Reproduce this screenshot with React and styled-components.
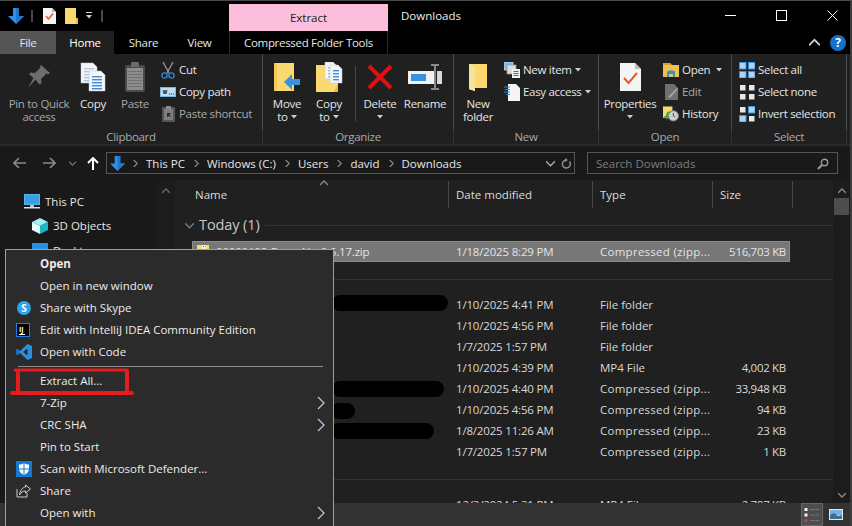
import React from "react";
import styled, { createGlobalStyle } from "styled-components";

const GlobalStyle = createGlobalStyle`
  html, body {
    margin: 0;
    padding: 0;
    background: #000;
    font-family: "Open Sans", "Noto Sans", sans-serif;
    font-size: 11.5px;
    color: #e4e4e4;
  }
`;

const Y = "#fbd96f";
const YD = "#e8b94a";
const B = "#2f90e6";

// ---- drawings

const ArrowDown = ({ s = 16 }) => (
  <svg width={s} height={s} viewBox="0 0 16 16">
    <path d="M5 0h6v8h5l-8 8-8-8h5z" fill={B} />
    <path d="M8 0h3v8h5l-8 8z" fill="#1c78cc" />
  </svg>
);
const DocCheck = () => (
  <svg width="13" height="16" viewBox="0 0 13 16">
    <path d="M0 0h9l4 4v12H0z" fill="#f4f4f4" />
    <path d="M9 0l4 4H9z" fill="#bbb" />
    <path d="M3 8l2.500 3L10 5.500" stroke="#e8602c" strokeWidth="1.600" fill="none" />
  </svg>
);
const FolderNote = () => (
  <svg width="13" height="16" viewBox="0 0 13 16">
    <path d="M0 0h11v16H0z" fill={Y} />
    <path d="M11 10h2v6h-2z" fill={YD} />
  </svg>
);
const Pin = () => (
  <svg width="22" height="24" viewBox="0 0 22 24">
    <path d="M13 0l9 8-2 1.500-1.500-1L13 14l.5 4-2 1.500-4-5L0 23l5.500-10-4.500-4 2-1.500 4 .5 5.500-5.500-.5-1.500z" fill="#6e6e6e" />
  </svg>
);
const DocLines = ({ x, y, w, h, c = "#3a8de0" }) => (
  <g>
    <path d={`M${x} ${y}h${w - 4}l4 4v${h - 4}h-${w}z`} fill="#f5f5f5" stroke="#c9c9c9" strokeWidth=".5" />
    {[5, 8, 11, 14, 17].filter((n) => n < h - 2).map((n) => (
      <rect key={n} x={x + 3} y={y + n} width={w - 6} height="1.400" fill={c} />
    ))}
  </g>
);
const CopyBig = () => (
  <svg width="26" height="30" viewBox="0 0 26 30">
    <DocLines x={1} y={1} w={16} h={20} c="#a7c7ea" />
    <DocLines x={9} y={9} w={16} h={20} />
  </svg>
);
const PasteBig = () => (
  <svg width="22" height="30" viewBox="0 0 22 30">
    <rect x="1" y="3" width="20" height="27" rx="2" fill="#4a4a4a" />
    <rect x="3" y="6" width="16" height="22" fill="#8c8c8c" />
    {[9, 12, 15, 18, 21, 24].map((n) => (
      <rect key={n} x="4" y={n} width="14" height="1" fill="#6f6f6f" />
    ))}
    <rect x="7" y="0" width="8" height="5" rx="1" fill="#6a6a6a" />
  </svg>
);
const Scissors = () => (
  <svg width="14" height="17" viewBox="0 0 14 17">
    <path d="M2 0l6 11M12 0L6 11" stroke="#9a9a9a" strokeWidth="1.300" fill="none" />
    <circle cx="3.500" cy="13.500" r="2.600" stroke="#2e86d6" strokeWidth="1.400" fill="none" />
    <circle cx="10.500" cy="13.500" r="2.600" stroke="#2e86d6" strokeWidth="1.400" fill="none" />
  </svg>
);
const PathBox = () => (
  <svg width="16" height="10" viewBox="0 0 16 10">
    <rect x=".5" y=".5" width="15" height="9" fill="#bcdff7" stroke="#7fb6e0" />
    <path d="M3 3l1 4 1-4 1 4 1-4" stroke="#222" strokeWidth=".8" fill="none" />
    <path d="M9 7h1M11 7h1M13 7h1" stroke="#222" />
  </svg>
);
const PasteSmall = () => (
  <svg width="13" height="16" viewBox="0 0 13 16">
    <rect x="0" y="1" width="13" height="15" rx="1" fill="#555" />
    <rect x="2" y="3" width="9" height="11" fill="#7e7e7e" />
    <rect x="4" y="0" width="5" height="3" fill="#8a8a8a" />
    <path d="M5 11V7h4l-1.500 1.500L9 10l-1 1-1.500-1.500L6 11z" fill="#2a2a2a" />
  </svg>
);
const MoveTo = () => (
  <svg width="28" height="29" viewBox="0 0 28 29">
    <path d="M1 0h20v28H1z" fill={Y} />
    <path d="M1 0h3v28H1z" fill="#f6c95a" />
    <path d="M11 19l8-8v5h8v6h-8v5z" fill="#3a94dc" />
  </svg>
);
const CopyTo = () => (
  <svg width="28" height="31" viewBox="0 0 28 31">
    <path d="M1 3h22v27H1z" fill={Y} />
    <path d="M23 22v8h-4z" fill={YD} />
    <DocLines x={10} y={0} w={12} h={17} c="#8fb9e6" />
    <DocLines x={15} y={3} w={12} h={18} />
  </svg>
);
const DeleteX = () => (
  <svg width="26" height="26" viewBox="0 0 26 26">
    <path d="M2 2l22 22M24 2L2 24" stroke="#e01010" strokeWidth="4" />
  </svg>
);
const RenameBox = () => (
  <svg width="34" height="28" viewBox="0 0 34 28">
    <rect x="0" y="8" width="27" height="13" fill="#f2f2f2" />
    <rect x="3" y="11" width="15" height="7" fill="#3a92de" />
    <path d="M27 2h-4m8 0h-4v24m0 0h-4m8 0h-4" stroke="#8a8a8a" strokeWidth="2" fill="none" />
    <rect x="29" y="8" width="5" height="13" fill="#dadada" />
  </svg>
);
const NewFolderBig = () => (
  <svg width="20" height="28" viewBox="0 0 20 28">
    <path d="M1 1l6 1v26l-6-2z" fill="#e6b94f" />
    <path d="M1 1h18v24H7v3l-6-2z" fill={Y} />
    <path d="M1 1l6 3v24l-6-2z" fill="#f7e3a0" />
  </svg>
);
const NewItem = () => (
  <svg width="16" height="16" viewBox="0 0 16 16">
    <rect x="0" y="0" width="9" height="8" fill="#7eb8e8" stroke="#ddd" strokeWidth=".7" />
    <rect x="3" y="3" width="9" height="9" fill="#ddd" stroke="#999" strokeWidth=".7" />
    <rect x="8" y="7" width="8" height="9" fill="#f2f2f2" />
    <path d="M9.500 9.500h5M9.500 11.500h5M9.500 13.500h5" stroke="#666" />
  </svg>
);
const EasyAccess = () => (
  <svg width="16" height="17" viewBox="0 0 16 17">
    <path d="M4 0h8l4 4v13H4z" fill="#f5f5f5" />
    <path d="M0 3h6M1 5.500h5M0 8h6M2 10.500h4" stroke="#2e86d6" strokeWidth="1" />
  </svg>
);
const PropertiesDoc = () => (
  <svg width="21" height="28" viewBox="0 0 21 28">
    <path d="M0 0h15l6 6v22H0z" fill="#f4f4f4" />
    <path d="M15 0l6 6h-6z" fill="#bdbdbd" />
    <path d="M4 15l4.500 5L17 10" stroke="#ea5a20" strokeWidth="2" fill="none" />
  </svg>
);
const OpenFolder = () => (
  <svg width="16" height="14" viewBox="0 0 16 14">
    <path d="M0 0h7l2 2h7v12H0z" fill="#f0c14b" />
    <path d="M0 0h7l1 2H0z" fill="#d9a52e" />
    <path d="M4 9c0-2 8-2 8 0v5h-2v-3H6v3H4z" fill="#2d8fe0" />
  </svg>
);
const EditDoc = () => (
  <svg width="13" height="16" viewBox="0 0 13 16">
    <path d="M0 0h9l4 4v12H0z" fill="#6f6f6f" />
    <path d="M3 13L12 4l1 1-8 9z" fill="#a8a8a8" />
  </svg>
);
const HistoryIcon = () => (
  <svg width="17" height="16" viewBox="0 0 17 16">
    <path d="M0 0h10v12H0z" fill={Y} />
    <circle cx="11" cy="10" r="5.500" fill="#cfcfcf" stroke="#777" />
    <path d="M11 7v3l2 1" stroke="#444" fill="none" />
    <path d="M1 10l3 4 3-4H5c0-2 1-3 3-3V5C5 5 3 7 3 10z" fill="#43a33c" />
  </svg>
);
const Squares = ({ kinds }) => (
  <svg width="16" height="16" viewBox="0 0 16 16">
    {[[0, 0], [9, 0], [0, 9], [9, 9]].map(([x, y], i) =>
      kinds[i] === "b" ? (
        <rect key={i} x={x + 0.5} y={y + 0.5} width="6.500" height="6.500" fill="#a9d4f5" stroke="#3a92de" />
      ) : (
        <rect key={i} x={x + 1} y={y + 1} width="5.500" height="5.500" fill="#e8e8e8" />
      )
    )}
  </svg>
);
const SmallCaret = () => (
  <svg width="6" height="4" viewBox="0 0 6 4">
    <path d="M0 0h6L3 3.500z" fill="#cfcfcf" />
  </svg>
);
const Chevron = ({ dir = "right", c = "#8a8a8a", s = 8 }) => {
  const d = {
    right: "M2 0l4 4-4 4",
    down: "M0 2l4 4 4-4",
    up: "M0 6l4-4 4 4",
  }[dir];
  return (
    <svg width={s} height={s} viewBox="0 0 8 8">
      <path d={d} stroke={c} strokeWidth="1.300" fill="none" />
    </svg>
  );
};
const NavArrow = ({ back, c }) => (
  <svg width="13" height="12" viewBox="0 0 13 12">
    <path
      d={back ? "M6 1L1 6l5 5M1 6h12" : "M7 1l5 5-5 5M12 6H0"}
      stroke={c}
      strokeWidth="1.600"
      fill="none"
    />
  </svg>
);
const UpArrow = () => (
  <svg width="12" height="13" viewBox="0 0 12 13">
    <path d="M1 6l5-5 5 5M6 1v12" stroke="#fff" strokeWidth="2" fill="none" />
  </svg>
);
const Refresh = () => (
  <svg width="11" height="12" viewBox="0 0 11 12">
    <path d="M8.500 3.500a4 4 0 1 1-3-1.500" stroke="#8f8f8f" strokeWidth="1.500" fill="none" />
    <path d="M4 0v4l3-2z" fill="#8f8f8f" />
  </svg>
);
const Magnifier = () => (
  <svg width="12" height="12" viewBox="0 0 12 12">
    <circle cx="7.500" cy="4.500" r="3.200" stroke="#999" strokeWidth="1.400" fill="none" />
    <path d="M5 7l-4 4" stroke="#999" strokeWidth="2" />
  </svg>
);
const Monitor = () => (
  <svg width="16" height="15" viewBox="0 0 16 15">
    <rect x="0" y="0" width="16" height="11" fill="#58b6ef" />
    <rect x="1" y="1" width="14" height="9" fill="#3aa0e4" />
    <rect x="6" y="11" width="4" height="2" fill="#bbb" />
    <rect x="0" y="13" width="16" height="1.500" fill="#ddd" />
  </svg>
);
const Cube = () => (
  <svg width="16" height="16" viewBox="0 0 16 16">
    <path d="M8 0l8 4-8 4-8-4z" fill="#9ff0f2" />
    <path d="M0 4l8 4v8l-8-4z" fill="#e6fbfb" />
    <path d="M16 4l-8 4v8l8-4z" fill="#1fb5c9" />
  </svg>
);
const DesktopIcon = () => (
  <svg width="16" height="14" viewBox="0 0 16 14">
    <rect width="16" height="11" fill="#2a8fe0" />
  </svg>
);
const ZipIcon = () => (
  <svg width="12" height="14" viewBox="0 0 12 14">
    <rect width="12" height="14" fill={Y} />
    <rect x="5" y="0" width="3" height="8" fill="#f4f4f4" />
    <rect x="6" y="1" width="1" height="1" fill="#444" />
    <rect x="6" y="4" width="1" height="1" fill="#444" />
  </svg>
);
const VsCode = () => (
  <svg width="16" height="16" viewBox="0 0 16 16">
    <path d="M11.500 0L16 2v12l-4.500 2L4 9l-2.500 2L0 10V6l1.500-1L4 7z" fill="#2c8fdc" />
    <path d="M11.500 4.500L7 8l4.500 3.500z" fill="#2b2b2b" />
    <path d="M0 6l1.500-1L4 8 1.500 11 0 10z" fill="#1c6fb8" />
  </svg>
);
const Shield = () => (
  <svg width="16" height="16" viewBox="0 0 16 16">
    <rect width="16" height="16" fill="#1678d2" />
    <path d="M8 2c1.500 1 3.500 1.500 5 1.500V8c0 3-2.500 5-5 6-2.500-1-5-3-5-6V3.500C4.500 3.500 6.500 3 8 2z" fill="#fff" />
    <path d="M7.500 2v12.500M8.500 2v12.500M3 7.500h10M3 8.500h10" stroke="#1678d2" strokeWidth=".5" />
  </svg>
);
const ShareIcon = () => (
  <svg width="15" height="14" viewBox="0 0 15 14">
    <path d="M1 5v8h10V9" stroke="#cfcfcf" fill="none" />
    <path d="M9.500 1l5 4-5 4V7C7 7 5 8 3.500 11 4 7 6 3.500 9.500 3z" stroke="#cfcfcf" fill="none" />
  </svg>
);
const DetailsView = () => (
  <svg width="16" height="16" viewBox="0 0 16 16">
    {[1, 6.500, 12].map((y, i) => (
      <g key={y}>
        <rect x="0.500" y={y} width="3" height="3" fill={["#f0f0f0", "#f0f0f0", "#e03030"][i]} />
        <rect x="6" y={y + 1} width="4" height="1" fill="#777" />
        <rect x="11" y={y + 1} width="4" height="1" fill="#777" />
      </g>
    ))}
  </svg>
);
const PreviewView = () => (
  <svg width="14" height="11" viewBox="0 0 14 11">
    <rect width="14" height="11" fill="#e8e8e8" />
    <rect x="1" y="1" width="12" height="5" fill="#6fb3e8" />
    <path d="M1 10V6l4-2 4 3 4-1v4z" fill="#3f6f8f" />
  </svg>
);
const MinLine = () => (
  <svg width="11" height="11" viewBox="0 0 11 11">
    <path d="M0 5.500h11" stroke="#fff" />
  </svg>
);
const MaxBox = () => (
  <svg width="11" height="11" viewBox="0 0 11 11">
    <rect x=".5" y=".5" width="10" height="10" stroke="#fff" fill="none" />
  </svg>
);
const CloseX = () => (
  <svg width="11" height="11" viewBox="0 0 11 11">
    <path d="M.5.500l10 10M10.500.500l-10 10" stroke="#fff" />
  </svg>
);

// ---- window frame

const Frame = styled.div`
  position: relative;
  width: 852px;
  height: 526px;
  overflow: hidden;
  display: flex;
  flex-direction: column;
  background: #000;
  border-top: 1px solid #4a4a4a;
  border-right: 2px solid #3c3c3c;
  box-sizing: border-box;
  line-height: 1;
`;
const Spacer = styled.span`
  width: ${(p) => p.$w}px;
  flex: none;
`;

const TitleBar = styled.div`
  display: flex;
  height: 30px;
  flex: none;
`;
const Qat = styled.div`
  width: 229px;
  display: flex;
  align-items: center;
  padding: 0 0 1px 8px;
  box-sizing: border-box;
`;
const QatDivider = styled.div`
  width: 2px;
  height: 12px;
  margin: 0 ${(p) => p.$right || 0}px 0 ${(p) => p.$left || 0}px;
  background: #4a4a4a;
`;
const QatDrop = styled.div`
  display: flex;
  flex-direction: column;
  align-items: center;
  gap: 2px;
  width: 8px;
  margin-left: 7px;
  &::before {
    content: "";
    width: 6px;
    height: 1px;
    background: #ddd;
  }
`;
const ContextTab = styled.div`
  width: 159px;
  margin-top: 3px;
  background: #fbbfdb;
  color: #222;
  display: flex;
  align-items: center;
  justify-content: center;
`;
const WindowTitle = styled.div`
  margin-left: 13px;
  display: flex;
  align-items: center;
  color: #eee;
`;
const WinButtons = styled.div`
  margin-left: auto;
  display: flex;
  align-items: center;
  padding-right: 12px;
  gap: 35px;
  padding-bottom: 2px;
  & > * + * {
    margin-left: 5px;
  }
`;

const TabRow = styled.div`
  display: flex;
  height: 23px;
  flex: none;
  align-items: stretch;
  letter-spacing: -0.3px;
`;
const Tab = styled.div`
  width: ${(p) => p.$w}px;
  margin-right: ${(p) => p.$gap || 0}px;
  display: flex;
  align-items: center;
  justify-content: center;
  color: ${(p) => (p.$active ? "#fff" : "#e6e6e6")};
  background: ${(p) => p.$bg || "transparent"};
  box-sizing: border-box;
  ${(p) => p.$ruled && "border-left: 1px solid #2c2c2c; border-right: 1px solid #2c2c2c;"}
`;
const TabRight = styled.div`
  margin-left: auto;
  display: flex;
  align-items: center;
  gap: 10px;
  padding-right: 4px;
`;
const Help = styled.div`
  width: 16px;
  height: 16px;
  border-radius: 50%;
  background: #1271c9;
  color: #fff;
  font-weight: 700;
  font-size: 12px;
  display: flex;
  align-items: center;
  justify-content: center;
`;

// ---- ribbon

const Ribbon = styled.div`
  display: flex;
  height: 92px;
  flex: none;
  background: #202020;
  border-bottom: 2px solid #2a2a2a;
  box-sizing: border-box;
  letter-spacing: -0.3px;
`;
const Group = styled.div`
  width: ${(p) => p.$w}px;
  flex: none;
  display: flex;
  flex-direction: column;
  box-sizing: border-box;
`;
const GroupBody = styled.div`
  flex: 1;
  display: flex;
  padding: 5px 0 0 ${(p) => p.$pad || 0}px;
  border-right: 1px solid #4a4a4a;
`;
const GroupLabel = styled.div`
  height: 14px;
  display: flex;
  align-items: center;
  justify-content: center;
  color: #a9a9a9;
  border-right: 1px solid #333;
`;
const BigButton = styled.div`
  width: ${(p) => p.$w}px;
  flex: none;
  display: flex;
  flex-direction: column;
  align-items: center;
  text-align: center;
  color: ${(p) => (p.$dim ? "#a9a9a9" : "#e6e6e6")};
`;
const BigIcon = styled.div`
  height: 36px;
  margin-bottom: 2px;
  display: flex;
  align-items: center;
  justify-content: center;
`;
const BigLabel = styled.div`
  line-height: 13px;
  white-space: nowrap;
`;
const CaretLine = styled.div`
  height: 13px;
  display: flex;
  align-items: center;
  justify-content: center;
  gap: 3px;
`;
const VRule = styled.div`
  width: 1px;
  height: 55px;
  margin: 7px 3px 0 5px;
  background: #484848;
`;
const SmallCol = styled.div`
  display: flex;
  flex-direction: column;
  margin-left: ${(p) => p.$left || 0}px;
`;
const SmallRow = styled.div`
  height: 22px;
  display: flex;
  align-items: center;
  gap: 3px;
  white-space: nowrap;
  color: ${(p) => (p.$dim ? "#a9a9a9" : "#e6e6e6")};
  & > svg {
    margin-left: ${(p) => p.$caretGap ?? 0}px;
  }
`;
const SmallIcon = styled.div`
  width: 16px;
  display: flex;
  justify-content: center;
  align-items: center;
`;

// ---- address bar

const AddressRow = styled.div`
  height: 34px;
  flex: none;
  display: flex;
  align-items: center;
  background: #191919;
  box-sizing: border-box;
`;
const NavButtons = styled.div`
  width: 106px;
  flex: none;
  display: flex;
  align-items: center;
  padding-left: 13px;
  box-sizing: border-box;
`;
const AddressBox = styled.div`
  width: 469px;
  height: 22px;
  flex: none;
  display: flex;
  align-items: center;
  border: 1px solid #555;
  box-sizing: border-box;
  padding: 1px 0 0 3px;
  color: #e6e6e6;
`;
const Crumb = styled.span`
  margin-right: 8px;
`;
const CrumbSep = styled.span`
  display: inline-flex;
  margin-right: 7px;
`;
const AddressEnd = styled.div`
  margin-left: auto;
  display: flex;
  align-items: center;
  gap: 6px;
  padding-right: 2px;
`;
const SearchBox = styled.div`
  width: 251px;
  height: 22px;
  margin-left: 12px;
  flex: none;
  display: flex;
  align-items: center;
  justify-content: space-between;
  border: 1px solid #555;
  box-sizing: border-box;
  padding: 1px 8px 0;
  color: #7d7d7d;
`;

// ---- panes

const Panes = styled.div`
  flex: 1;
  display: flex;
  min-height: 0;
`;
const NavPane = styled.div`
  width: 176px;
  flex: none;
  display: flex;
  background: #191919;
  border-right: 1px solid #222;
  box-sizing: border-box;
`;
const NavList = styled.div`
  flex: 1;
  padding-top: 9px;
`;
const NavItem = styled.div`
  height: 24.5px;
  display: flex;
  align-items: center;
  gap: 5px;
  padding-left: ${(p) => p.$indent}px;
  color: #e6e6e6;
`;
const NavScroll = styled.div`
  width: 18px;
  padding-top: 7px;
  display: flex;
  justify-content: center;
  align-items: flex-start;
  background: #1c1c1c;
`;
const Content = styled.div`
  flex: 1;
  display: flex;
  background: #202020;
  min-width: 0;
`;
const ListArea = styled.div`
  flex: 1;
  min-width: 0;
  overflow: hidden;
`;
const Columns = styled.div`
  display: grid;
  grid-template-columns: 257px 144px 120px 80px;
  margin-left: 16px;
`;
const HeaderRow = styled(Columns)`
  height: 28px;
  align-items: center;
`;
const HeaderCell = styled.div`
  position: relative;
  height: 27px;
  display: flex;
  align-items: center;
  padding: 2px 0 0 ${(p) => p.$pad || 7}px;
  box-sizing: border-box;
  border-right: 1px solid #484848;
  color: #dcdcdc;
`;
const SortMark = styled.span`
  position: absolute;
  left: 50%;
  top: -2px;
  display: flex;
`;
const GroupHeader = styled.div`
  height: 20px;
  margin: ${(p) => p.$top}px 0 ${(p) => p.$bottom}px;
  display: flex;
  align-items: center;
  padding-left: 9px;
  color: #c8c8c8;
  font-size: 14.5px;
  letter-spacing: -0.1px;
  gap: 5px;
  &::after {
    content: "";
    flex: 1;
    height: 1px;
    background: #333;
  }
`;
const GroupCaret = styled.span`
  display: flex;
`;
const FileRow = styled(Columns)`
  height: 21px;
  align-items: center;
  color: #d8d8d8;
  letter-spacing: -0.18px;
  ${(p) =>
    p.$selected &&
    `
    background: #777;
    outline: 1px solid #8d8d8d;
    outline-offset: -1px;
    width: 598px;
    color: #e4e4e4;
    grid-template-columns: 257px 144px 120px 77px;
  `}
`;
const NameCell = styled.div`
  display: flex;
  align-items: center;
  gap: 7px;
  padding-left: 5px;
  white-space: nowrap;
  overflow: hidden;
`;
const Cell = styled.div`
  padding-left: 7px;
  white-space: nowrap;
`;
const TypeCell = styled(Cell)`
  letter-spacing: ${(p) => (p.$zip ? "0.27px" : "0")};
`;
const SizeCell = styled.div`
  text-align: right;
  padding-right: ${(p) => (p.$selected ? 4 : 7)}px;
  white-space: nowrap;
  letter-spacing: -0.3px;
`;
const Redaction = styled.div`
  position: absolute;
  left: ${(p) => p.$x}px;
  top: ${(p) => p.$y}px;
  width: ${(p) => p.$w}px;
  height: 16px;
  border-radius: 8px;
  background: #000;
`;
const Scrollbar = styled.div`
  width: 17px;
  flex: none;
  display: flex;
  flex-direction: column;
  align-items: center;
  background: #1c1c1c;
  padding: 7px 0 4px;
  box-sizing: border-box;
`;
const ScrollThumb = styled.div`
  width: 15px;
  height: 17px;
  margin-top: 3px;
  background: #4d4d4d;
`;
const ScrollEnd = styled.div`
  margin-top: auto;
  display: flex;
`;
const StatusBar = styled.div`
  height: 23px;
  flex: none;
  display: flex;
  justify-content: flex-end;
  background: #333;
  padding-right: 5px;
  gap: 3px;
  box-sizing: border-box;
`;
const ViewButton = styled.div`
  width: ${(p) => p.$w}px;
  display: flex;
  align-items: center;
  justify-content: center;
  ${(p) => p.$on && "background: #4d4d4d; border: 1px solid #666; box-sizing: border-box;"}
`;

// ---- context menu

const Menu = styled.div`
  position: absolute;
  left: 5px;
  top: 248px;
  width: 329px;
  height: 290px;
  box-sizing: border-box;
  background: #2b2b2b;
  border: 1px solid #a0a0a0;
  padding-top: 3px;
  color: #ececec;
`;
const MenuItem = styled.div`
  height: 22px;
  display: flex;
  align-items: center;
  font-weight: ${(p) => (p.$bold ? 700 : 400)};
`;
const MenuIcon = styled.div`
  width: 34px;
  padding-left: 10px;
  box-sizing: border-box;
  flex: none;
  display: flex;
  align-items: center;
`;
const MenuArrow = styled.div`
  margin-left: auto;
  margin-right: 7px;
  display: flex;
`;
const MenuRule = styled.div`
  height: 1px;
  margin: 3px 10px 3px 12px;
  background: #8c8c8c;
`;
const SkypeBadge = styled.div`
  width: 14px;
  height: 14px;
  margin-left: 1px;
  border-radius: 50%;
  background: #2aa6e8;
  color: #fff;
  font-size: 10px;
  font-weight: 700;
  display: flex;
  align-items: center;
  justify-content: center;
`;
const IdeaBadge = styled.div`
  width: 14px;
  height: 14px;
  background: #000;
  border: 1px solid #1d7fe0;
  color: #fff;
  font-size: 7px;
  font-weight: 700;
  padding-left: 2px;
  box-sizing: border-box;
  display: flex;
  flex-direction: column;
  justify-content: center;
  &::after {
    content: "";
    width: 6px;
    height: 1px;
    margin-top: 1px;
    background: #fff;
  }
`;
const Annotation = styled.svg`
  position: absolute;
  left: 8px;
  top: 366px;
`;

const files = [
  ["1/10/2025 4:41 PM", "File folder", ""],
  ["1/10/2025 4:56 PM", "File folder", ""],
  ["1/7/2025 1:57 PM", "File folder", ""],
  ["1/10/2025 4:39 PM", "MP4 File", "4,002 KB"],
  ["1/10/2025 4:40 PM", "Compressed (zipp...", "33,948 KB"],
  ["1/10/2025 4:56 PM", "Compressed (zipp...", "94 KB"],
  ["1/8/2025 11:26 AM", "Compressed (zipp...", "23 KB"],
  ["1/7/2025 1:57 PM", "Compressed (zipp...", "1 KB"],
];

const menuTop = [
  { label: "Open", bold: true },
  { label: "Open in new window" },
  { label: "Share with Skype", icon: <SkypeBadge>S</SkypeBadge> },
  { label: "Edit with IntelliJ IDEA Community Edition", icon: <IdeaBadge>IJ</IdeaBadge> },
  { label: "Open with Code", icon: <VsCode /> },
];
const menuBottom = [
  { label: "Extract All..." },
  { label: "7-Zip", more: true },
  { label: "CRC SHA", more: true },
  { label: "Pin to Start" },
  { label: "Scan with Microsoft Defender...", icon: <Shield /> },
  { label: "Share", icon: <ShareIcon /> },
  { label: "Open with", more: true },
];

const crumbs = ["This PC", "Windows (C:)", "Users", "david", "Downloads"];

const Entry = ({ item }) => (
  <MenuItem $bold={item.bold}>
    <MenuIcon>{item.icon}</MenuIcon>
    {item.label}
    {item.more && (
      <MenuArrow>
        <svg width="10" height="14" viewBox="0 0 10 14">
          <path d="M2 1l6 6-6 6" stroke="#b9cfe6" strokeWidth="1.200" fill="none" />
        </svg>
      </MenuArrow>
    )}
  </MenuItem>
);

export default function App() {
  return (
    <>
      <GlobalStyle />
      <Frame>
        <TitleBar>
          <Qat>
            <ArrowDown />
            <QatDivider $left={7} $right={10} />
            <DocCheck />
            <Spacer $w={9} />
            <FolderNote />
            <QatDrop>
              <SmallCaret />
            </QatDrop>
            <QatDivider $left={8} />
          </Qat>
          <ContextTab>Extract</ContextTab>
          <WindowTitle>Downloads</WindowTitle>
          <WinButtons>
            <MinLine />
            <MaxBox />
            <CloseX />
          </WinButtons>
        </TitleBar>

        <TabRow>
          <Tab $w={56} $bg="#555">File</Tab>
          <Tab $w={58} $bg="#202020" $active>Home</Tab>
          <Tab $w={59}>Share</Tab>
          <Tab $w={53} $gap={3}>View</Tab>
          <Tab $w={159} $ruled>Compressed Folder Tools</Tab>
          <TabRight>
            <Chevron dir="up" c="#ccc" s={11} />
            <Help>?</Help>
          </TabRight>
        </TabRow>

        <Ribbon>
          <Group $w={263}>
            <GroupBody $pad={8}>
              <BigButton $w={62} $dim>
                <BigIcon><Pin /></BigIcon>
                <BigLabel>Pin to Quick<br />access</BigLabel>
              </BigButton>
              <BigButton $w={46}>
                <BigIcon><CopyBig /></BigIcon>
                <BigLabel>Copy</BigLabel>
              </BigButton>
              <BigButton $w={38} $dim>
                <BigIcon><PasteBig /></BigIcon>
                <BigLabel>Paste</BigLabel>
              </BigButton>
              <SmallCol $left={6}>
                <SmallRow><SmallIcon><Scissors /></SmallIcon>Cut</SmallRow>
                <SmallRow><SmallIcon><PathBox /></SmallIcon>Copy path</SmallRow>
                <SmallRow $dim><SmallIcon><PasteSmall /></SmallIcon>Paste shortcut</SmallRow>
              </SmallCol>
            </GroupBody>
            <GroupLabel>Clipboard</GroupLabel>
          </Group>

          <Group $w={191}>
            <GroupBody $pad={3}>
              <BigButton $w={42}>
                <BigIcon><MoveTo /></BigIcon>
                <BigLabel>Move</BigLabel>
                <CaretLine>to <SmallCaret /></CaretLine>
              </BigButton>
              <BigButton $w={42}>
                <BigIcon><CopyTo /></BigIcon>
                <BigLabel>Copy</BigLabel>
                <CaretLine>to <SmallCaret /></CaretLine>
              </BigButton>
              <VRule />
              <BigButton $w={42}>
                <BigIcon><DeleteX /></BigIcon>
                <BigLabel>Delete</BigLabel>
                <CaretLine><SmallCaret /></CaretLine>
              </BigButton>
              <BigButton $w={48}>
                <BigIcon><RenameBox /></BigIcon>
                <BigLabel>Rename</BigLabel>
              </BigButton>
            </GroupBody>
            <GroupLabel>Organize</GroupLabel>
          </Group>

          <Group $w={145}>
            <GroupBody>
              <BigButton $w={48}>
                <BigIcon><NewFolderBig /></BigIcon>
                <BigLabel>New<br />folder</BigLabel>
              </BigButton>
              <SmallCol $left={2}>
                <SmallRow><SmallIcon><NewItem /></SmallIcon>New item <SmallCaret /></SmallRow>
                <SmallRow><SmallIcon><EasyAccess /></SmallIcon>Easy access <SmallCaret /></SmallRow>
              </SmallCol>
            </GroupBody>
            <GroupLabel>New</GroupLabel>
          </Group>

          <Group $w={133}>
            <GroupBody>
              <BigButton $w={62}>
                <BigIcon><PropertiesDoc /></BigIcon>
                <BigLabel>Properties</BigLabel>
                <CaretLine><SmallCaret /></CaretLine>
              </BigButton>
              <SmallCol $left={2}>
                <SmallRow $caretGap={3}><SmallIcon><OpenFolder /></SmallIcon>Open <SmallCaret /></SmallRow>
                <SmallRow $dim><SmallIcon><EditDoc /></SmallIcon>Edit</SmallRow>
                <SmallRow><SmallIcon><HistoryIcon /></SmallIcon>History</SmallRow>
              </SmallCol>
            </GroupBody>
            <GroupLabel>Open</GroupLabel>
          </Group>

          <Group $w={115}>
            <GroupBody $pad={7}>
              <SmallCol>
                <SmallRow><SmallIcon><Squares kinds="bbbb" /></SmallIcon>Select all</SmallRow>
                <SmallRow><SmallIcon><Squares kinds="wwww" /></SmallIcon>Select none</SmallRow>
                <SmallRow><SmallIcon><Squares kinds="wbbw" /></SmallIcon>Invert selection</SmallRow>
              </SmallCol>
            </GroupBody>
            <GroupLabel>Select</GroupLabel>
          </Group>
        </Ribbon>

        <AddressRow>
          <NavButtons>
            <NavArrow back c="#8a8a8a" />
            <Spacer $w={17} />
            <NavArrow c="#8a8a8a" />
            <Spacer $w={13} />
            <Chevron dir="down" c="#777" s={7} />
            <Spacer $w={11} />
            <UpArrow />
          </NavButtons>
          <AddressBox>
            <ArrowDown s={15} />
            <Spacer $w={7} />
            {crumbs.map((c) => (
              <React.Fragment key={c}>
                <CrumbSep><Chevron c="#8a8a8a" s={7} /></CrumbSep>
                <Crumb>{c}</Crumb>
              </React.Fragment>
            ))}
            <AddressEnd>
              <Chevron dir="down" c="#aaa" s={9} />
              <Refresh />
            </AddressEnd>
          </AddressBox>
          <SearchBox>
            Search Downloads
            <Magnifier />
          </SearchBox>
        </AddressRow>

        <Panes>
          <NavPane>
            <NavList>
              <NavItem $indent={24}><Monitor />This PC</NavItem>
              <NavItem $indent={32}><Cube />3D Objects</NavItem>
              <NavItem $indent={32}><DesktopIcon />Desktop</NavItem>
            </NavList>
            <NavScroll><Chevron dir="up" c="#6a6a6a" /></NavScroll>
          </NavPane>
          <Content>
            <ListArea>
              <HeaderRow>
                <HeaderCell $pad={3}>
                  Name
                  <SortMark><Chevron dir="up" c="#8a8a8a" /></SortMark>
                </HeaderCell>
                <HeaderCell>Date modified</HeaderCell>
                <HeaderCell>Type</HeaderCell>
                <HeaderCell>Size</HeaderCell>
              </HeaderRow>

              <GroupHeader $top={7} $bottom={6}>
                <GroupCaret><Chevron dir="down" c="#7a7a7a" s={9} /></GroupCaret>
                Today (1)
              </GroupHeader>
              <FileRow $selected>
                <NameCell><ZipIcon />00000102-DaemNo-0.6.17.zip</NameCell>
                <Cell>1/18/2025 8:29 PM</Cell>
                <TypeCell $zip>Compressed (zipp...</TypeCell>
                <SizeCell $selected>516,703 KB</SizeCell>
              </FileRow>

              <GroupHeader $top={7} $bottom={5}>
                <GroupCaret><Chevron dir="down" c="#7a7a7a" s={9} /></GroupCaret>
                This month (8)
              </GroupHeader>
              {files.map((f, i) => (
                <FileRow key={i}>
                  <NameCell />
                  <Cell>{f[0]}</Cell>
                  <TypeCell $zip={f[1].startsWith("Compressed")}>{f[1]}</TypeCell>
                  <SizeCell>{f[2]}</SizeCell>
                </FileRow>
              ))}

              <GroupHeader $top={7} $bottom={5}>
                <GroupCaret><Chevron dir="down" c="#7a7a7a" s={9} /></GroupCaret>
                Last month (3)
              </GroupHeader>
              <FileRow>
                <NameCell />
                <Cell>12/3/2024 5:31 PM</Cell>
                <TypeCell>MP4 File</TypeCell>
                <SizeCell>2,797 KB</SizeCell>
              </FileRow>
            </ListArea>
            <Scrollbar>
              <Chevron dir="up" c="#8a8a8a" />
              <ScrollThumb />
              <ScrollEnd><Chevron dir="down" c="#8a8a8a" /></ScrollEnd>
            </Scrollbar>
          </Content>
        </Panes>

        <StatusBar>
          <ViewButton $w={22} $on><DetailsView /></ViewButton>
          <ViewButton $w={19}><PreviewView /></ViewButton>
        </StatusBar>

        <Redaction $x={332} $y={294} $w={116} />
        <Redaction $x={332} $y={380} $w={112} />
        <Redaction $x={331} $y={402} $w={24} />
        <Redaction $x={331} $y={422} $w={103} />

        <Menu>
          {menuTop.map((m) => <Entry key={m.label} item={m} />)}
          <MenuRule />
          {menuBottom.map((m) => <Entry key={m.label} item={m} />)}
        </Menu>
        <Annotation width="130" height="32" viewBox="0 0 130 32">
          <path d="M7 3h112" stroke="#e61c1c" strokeWidth="3" strokeLinecap="round" />
          <path d="M10 3v23M119 3v23" stroke="#e61c1c" strokeWidth="4" />
          <path d="M4 26h120" stroke="#e61c1c" strokeWidth="4" strokeLinecap="round" />
        </Annotation>
      </Frame>
    </>
  );
}
